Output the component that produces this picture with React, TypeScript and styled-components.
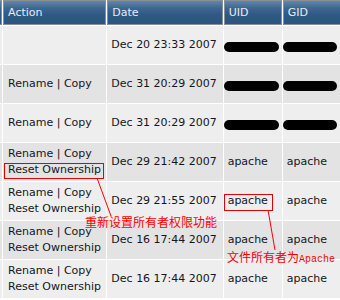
import React from 'react';
import styled, { createGlobalStyle } from 'styled-components';

const Global = createGlobalStyle`
  html, body { margin: 0; padding: 0; background: #fff; }
  body { width: 340px; height: 300px; overflow: hidden; }
`;

const Frame = styled.div`
  position: relative;
  width: 340px;
  height: 300px;
  overflow: hidden;
`;

const Table = styled.table`
  border-collapse: separate;
  border-spacing: 1px;
  table-layout: fixed;
  width: 385px;
  margin: -1px 0 0 -31px;
  font-family: "DejaVu Sans", Verdana, sans-serif;
  font-size: 11px;
  color: #15151f;
`;

const Th = styled.th`
  box-sizing: border-box;
  height: 25px;
  padding: 0 0 0 4px;
  border: 1px solid #8a8f96;
  background: linear-gradient(#6486a8 0%, #3f6790 30%, #2f5884 60%, #2c547e 100%);
  color: #e6edf5;
  font-weight: normal;
  text-align: left;
  vertical-align: middle;
  white-space: nowrap;
`;

const Row = styled.tr<{ $alt?: boolean }>`
  background: ${p => (p.$alt ? '#e3e3e3' : '#eeeeee')};
`;

const Td = styled.td<{ $first?: boolean }>`
  box-sizing: border-box;
  height: 38px;
  padding: 0 4px 0 ${p => (p.$first ? '5px' : '4px')};
  line-height: 16px;
  vertical-align: middle;
  white-space: nowrap;
  overflow: hidden;
`;

const Redacted = styled.span<{ $w: number }>`
  display: inline-block;
  width: ${p => p.$w}px;
  height: 10px;
  margin-left: -4px;
  margin-top: 3px;
  border-radius: 5px;
  background: #000;
  vertical-align: middle;
`;

const Box = styled.div<{ $x: number; $y: number; $w: number; $h: number }>`
  position: absolute;
  left: ${p => p.$x}px;
  top: ${p => p.$y}px;
  width: ${p => p.$w}px;
  height: ${p => p.$h}px;
  box-sizing: border-box;
  border: 1px solid #e00000;
  pointer-events: none;
`;

const Note = styled.div<{ $x: number; $y: number }>`
  position: absolute;
  left: ${p => p.$x}px;
  top: ${p => p.$y}px;
  font-family: "Noto Sans CJK SC", sans-serif;
  font-size: 12px;
  line-height: 12px;
  color: #ff0000;
  white-space: nowrap;
`;

const Mono = styled.span`
  font-family: "Liberation Mono", monospace;
  font-size: 10px;
`;

const Lines = styled.svg`
  position: absolute;
  left: 0;
  top: 0;
  pointer-events: none;
`;

type R = { action: number; date: string; owner: string | null };

const rows: R[] = [
  { action: 0, date: 'Dec 20 23:33 2007', owner: null },
  { action: 1, date: 'Dec 31 20:29 2007', owner: null },
  { action: 1, date: 'Dec 31 20:29 2007', owner: null },
  { action: 2, date: 'Dec 29 21:42 2007', owner: 'apache' },
  { action: 2, date: 'Dec 29 21:55 2007', owner: 'apache' },
  { action: 2, date: 'Dec 16 17:44 2007', owner: 'apache' },
  { action: 2, date: 'Dec 16 17:44 2007', owner: 'apache' },
];

export default function App() {
  return (
    <Frame>
      <Global />
      <Table>
        <colgroup>
          <col style={{ width: 32 }} />
          <col style={{ width: 103 }} />
          <col style={{ width: 115 }} />
          <col style={{ width: 58 }} />
          <col style={{ width: 70 }} />
        </colgroup>
        <thead>
          <tr>
            <Th></Th>
            <Th>Action</Th>
            <Th>Date</Th>
            <Th>UID</Th>
            <Th>GID</Th>
          </tr>
        </thead>
        <tbody>
          {rows.map((r, i) => (
            <Row key={i} $alt={i % 2 === 1}>
              <Td></Td>
              <Td $first>
                {r.action >= 1 && <div>Rename | Copy</div>}
                {r.action >= 2 && <div>Reset Ownership</div>}
              </Td>
              <Td>{r.date}</Td>
              <Td>{r.owner ?? <Redacted $w={55} />}</Td>
              <Td>{r.owner ?? <Redacted $w={54} />}</Td>
            </Row>
          ))}
        </tbody>
      </Table>
      <Box $x={4} $y={163} $w={100} $h={16} />
      <Box $x={224} $y={194} $w={49} $h={17} />
      <Lines width={340} height={300}>
        <line x1={97} y1={178} x2={111} y2={216} stroke="#ff0000" strokeWidth={1} />
        <line x1={268} y1={210} x2={275} y2={250} stroke="#ff0000" strokeWidth={1} />
      </Lines>
      <Note $x={85} $y={216}>重新设置所有者权限功能</Note>
      <Note $x={227} $y={251}>
        文件所有者为<Mono>Apache</Mono>
      </Note>
    </Frame>
  );
}
